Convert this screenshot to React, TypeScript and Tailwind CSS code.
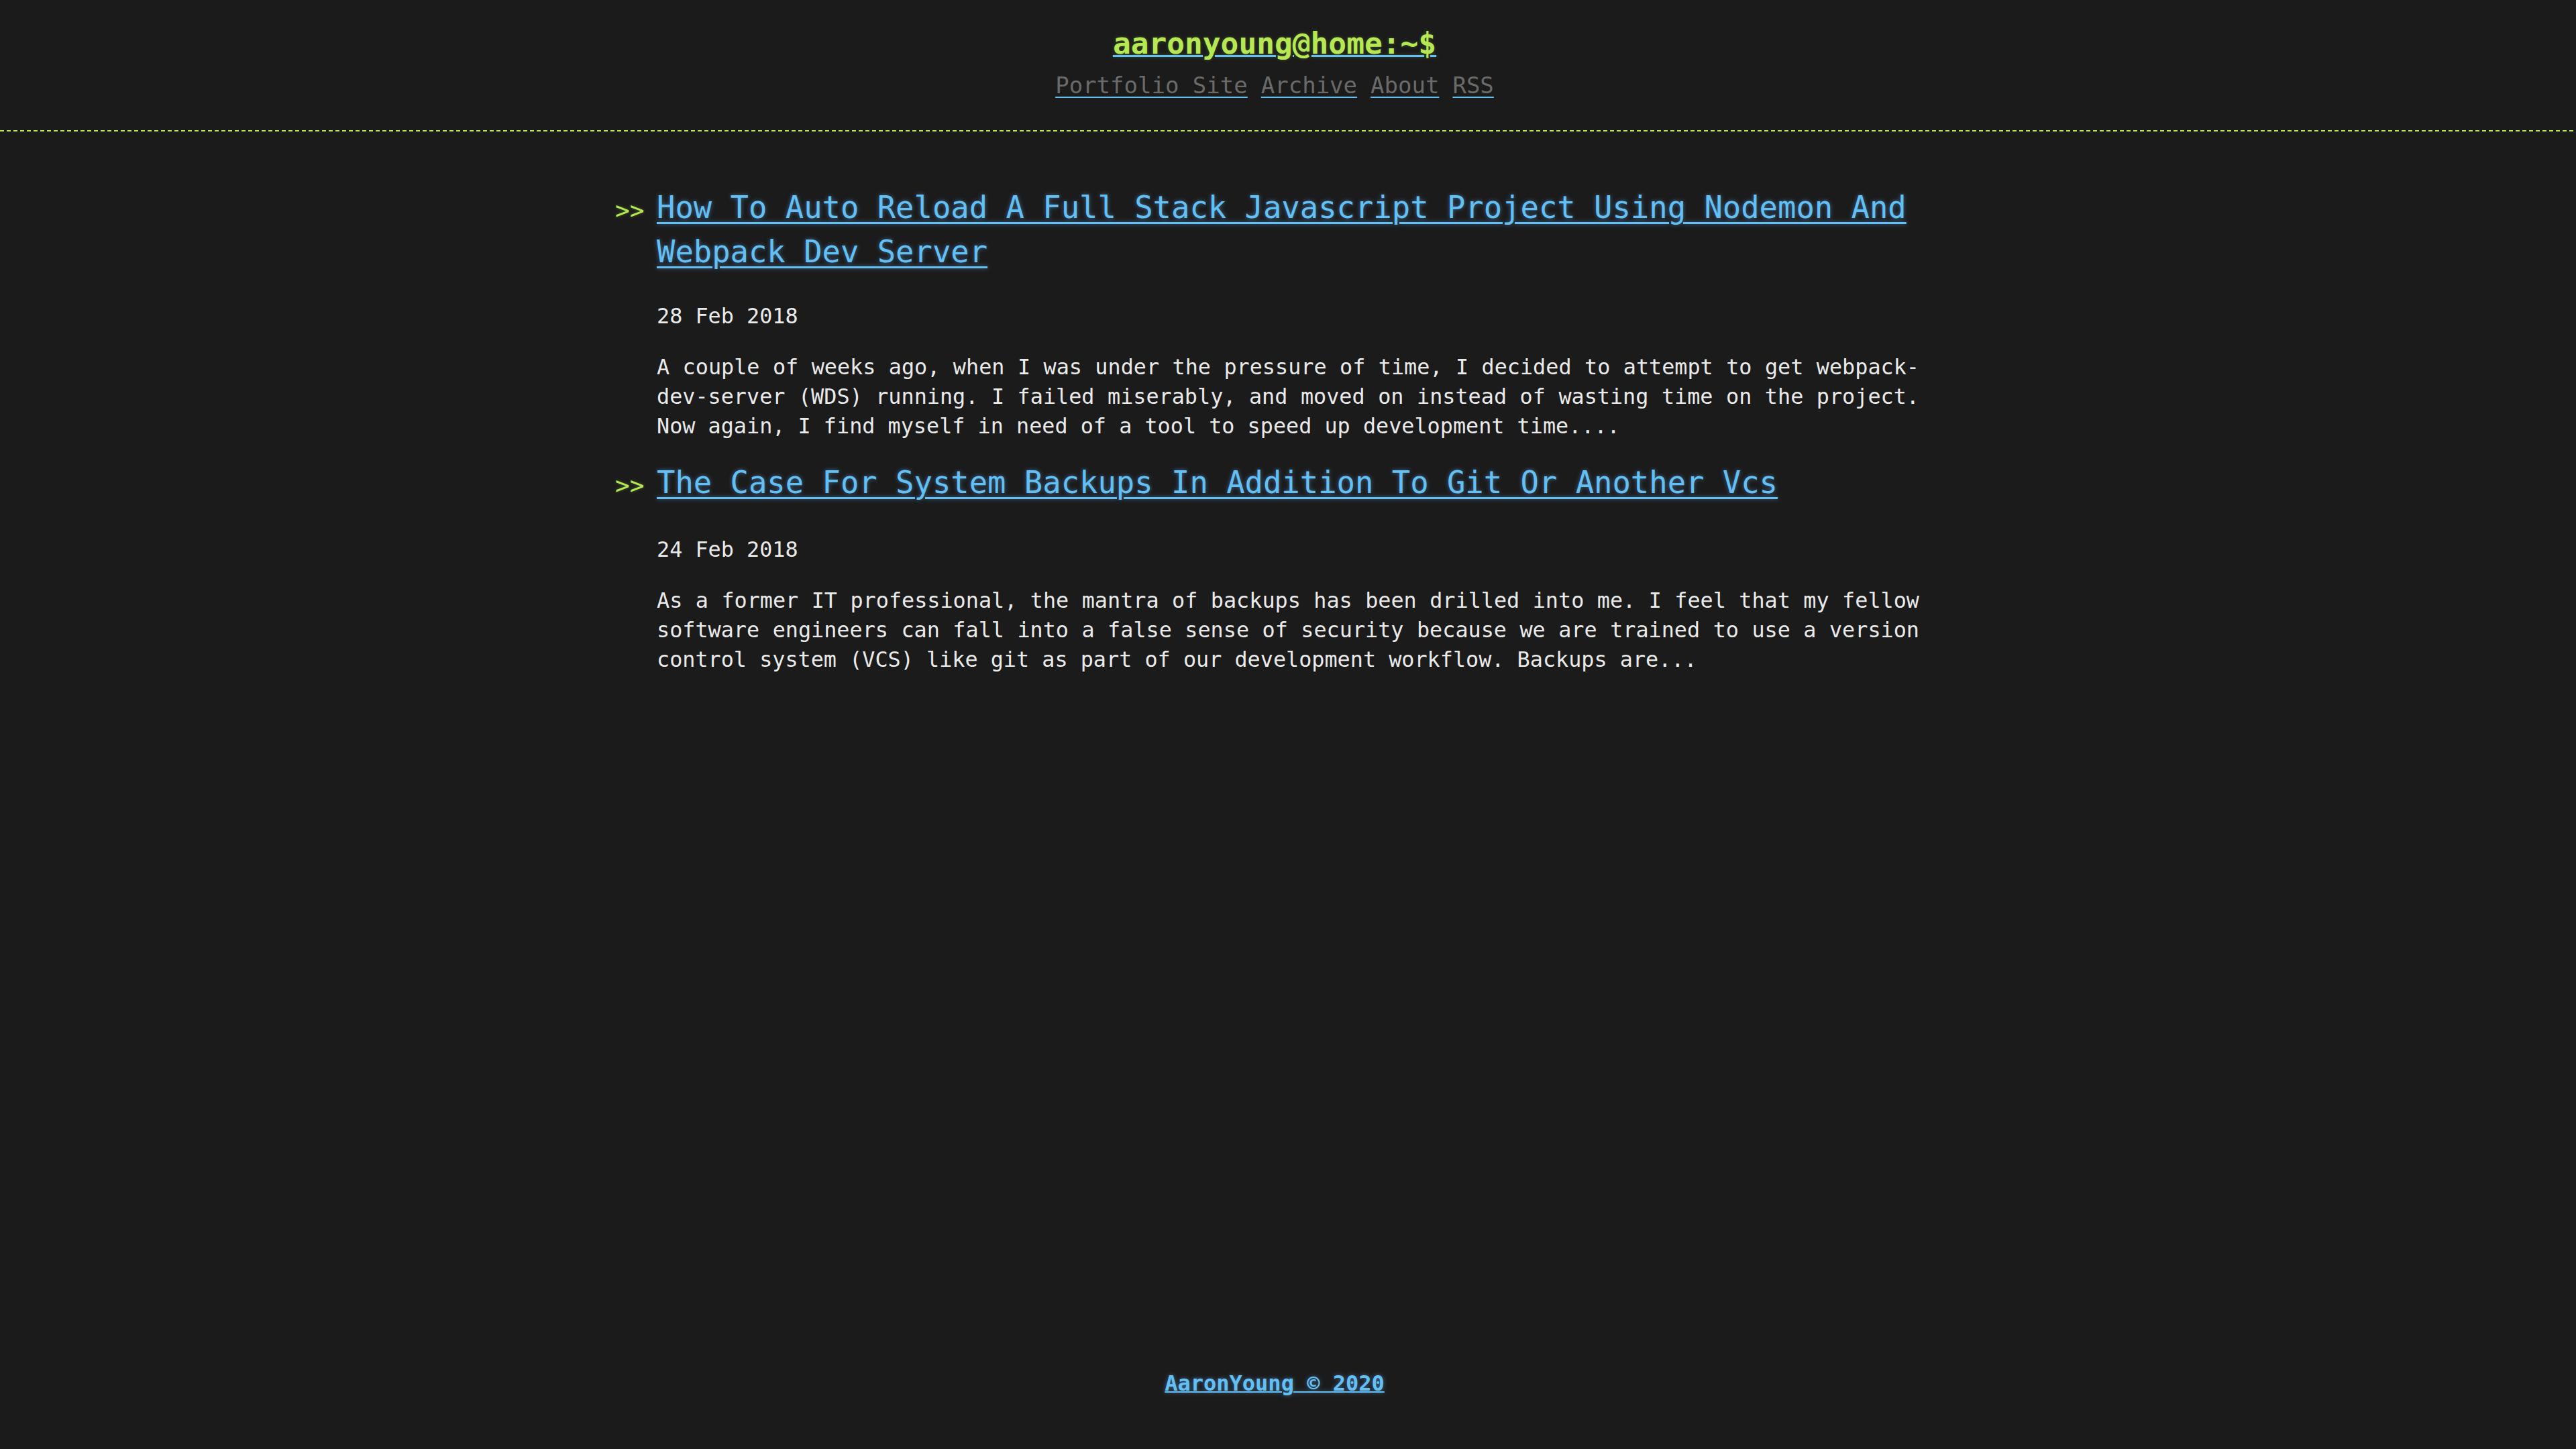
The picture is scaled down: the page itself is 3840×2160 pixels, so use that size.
import React from "react";

interface Post {
  title: string;
  date: string;
  excerpt: string;
}

const posts: Post[] = [
  {
    title:
      "How To Auto Reload A Full Stack Javascript Project Using Nodemon And Webpack Dev Server",
    date: "28 Feb 2018",
    excerpt:
      "A couple of weeks ago, when I was under the pressure of time, I decided to attempt to get webpack-dev-server (WDS) running. I failed miserably, and moved on instead of wasting time on the project. Now again, I find myself in need of a tool to speed up development time....",
  },
  {
    title: "The Case For System Backups In Addition To Git Or Another Vcs",
    date: "24 Feb 2018",
    excerpt:
      "As a former IT professional, the mantra of backups has been drilled into me. I feel that my fellow software engineers can fall into a false sense of security because we are trained to use a version control system (VCS) like git as part of our development workflow. Backups are...",
  },
];

const navLinks = ["Portfolio Site", "Archive", "About", "RSS"];

const App = () => {
  return (
    <div className="min-h-screen flex flex-col bg-[#1b1b1b] text-[#eaeaea] font-['DejaVu_Sans_Mono','Liberation_Mono',monospace]">
      {/* header */}
      <header className="pt-[38px] pb-[45px] pr-[40px] text-center">
        <a
          href="#"
          className="text-[44.5px] leading-[53px] font-bold text-[#b5e853] underline decoration-[#63c0f5] decoration-[3px] [text-shadow:0_0_5px_rgba(181,232,83,0.25)]"
        >
          aaronyoung@home:~$
        </a>
        <nav className="mt-[14px] flex justify-center gap-[20px] text-[34px] leading-[44px]">
          {navLinks.map((link) => (
            <a
              key={link}
              href="#"
              className="text-[#6a6a6a] underline decoration-[#63c0f5] decoration-[2px] underline-offset-[5px]"
            >
              {link}
            </a>
          ))}
        </nav>
      </header>
      {/* dashed rule */}
      <div className="h-[2px] bg-[repeating-linear-gradient(90deg,#b5e853_0_6px,transparent_6px_10px)]" />

      {/* posts */}
      <main className="flex-1 w-[1882px] mx-auto pt-[81px]">
        {posts.map((post) => (
          <article key={post.date} className="mb-[30px]">
            <h2 className="flex -ml-[62px] text-[45.5px] leading-[66px]">
              <span className="w-[62px] shrink-0 pt-[4px] text-[36px] text-[#b5e853] [text-shadow:0_0_5px_rgba(181,232,83,0.3)]">
                &gt;&gt;
              </span>
              <a
                href="#"
                className="text-[#63c0f5] underline decoration-[3px] underline-offset-[6px] [text-shadow:0_0_6px_rgba(104,182,255,0.5)]"
              >
                {post.title}
              </a>
            </h2>
            <p className="mt-[40px] text-[31.8px] leading-[44px]">{post.date}</p>
            <p className="mt-[32px] text-[31.8px] leading-[44px] text-justify">
              {post.excerpt}
            </p>
          </article>
        ))}
      </main>

      {/* footer */}
      <footer className="pb-[76px] pr-[40px] text-center text-[32px] leading-[44px]">
        <a
          href="#"
          className="font-bold text-[#63c0f5] underline decoration-[2px] [text-shadow:0_0_6px_rgba(104,182,255,0.5)]"
        >
          AaronYoung © 2020
        </a>
      </footer>
    </div>
  );
};

export default App;
